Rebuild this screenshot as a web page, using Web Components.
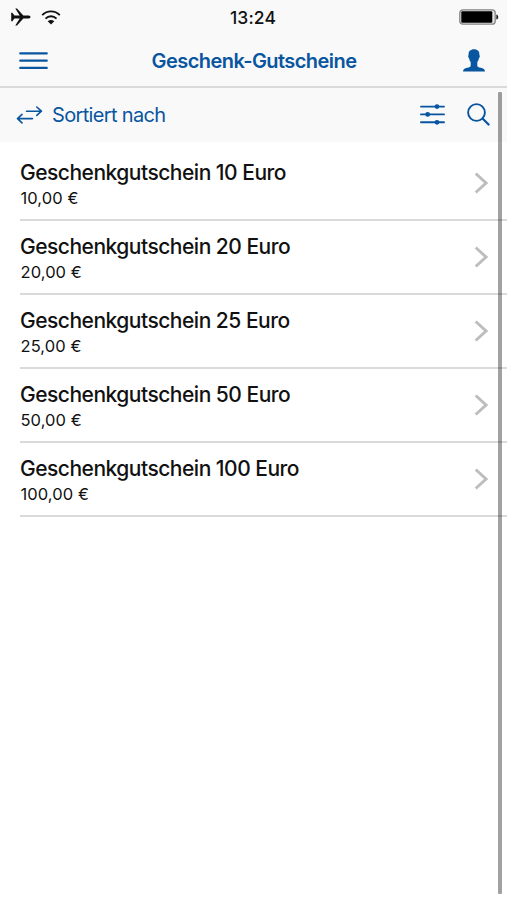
<!DOCTYPE html>
<html lang="de">
<head>
<meta charset="utf-8">
<meta name="viewport" content="width=device-width, initial-scale=1">
<title>Geschenk-Gutscheine</title>
<style>
    body {
        margin: 0;
        background: #fff;
        font-family: Inter, "Liberation Sans", sans-serif;
        color: #111;
    }
</style>
</head>
<body>
<voucher-screen>
    <status-bar time="13:24"></status-bar>
    <nav-bar>Geschenk-Gutscheine</nav-bar>
    <sort-bar>Sortiert nach</sort-bar>
    <voucher-item price="10,00 €">Geschenkgutschein 10 Euro</voucher-item>
    <voucher-item price="20,00 €">Geschenkgutschein 20 Euro</voucher-item>
    <voucher-item price="25,00 €">Geschenkgutschein 25 Euro</voucher-item>
    <voucher-item price="50,00 €">Geschenkgutschein 50 Euro</voucher-item>
    <voucher-item price="100,00 €">Geschenkgutschein 100 Euro</voucher-item>
</voucher-screen>

<script>
const ICONS = {
    plane: { w: 20, h: 18, body: '<path fill="currentColor" d="M.2 4.800h1.200l2 2.800 5.300-.1L4.300.6h1.700l6.300 6.900h4.700c1.500 0 2.600.7 2.600 1.500s-1.100 1.500-2.600 1.500h-4.700l-6.300 6.900H4.300l4.400-6.900-5.300-.1-2 2.800H.2z"/>' },
    wifi: { w: 20, h: 15, body: '<g fill="none" stroke="currentColor" stroke-width="1.900"><path d="M1.200 5.100C6.200.1 13.800.1 18.800 5.100"/><path d="M4.500 8.600c3.200-3.100 7.800-3.100 11 0"/></g><path fill="currentColor" d="M10 14.500 6.700 11.300c2-1.700 4.600-1.700 6.600 0z"/>' },
    battery: { w: 40, h: 16, body: '<rect x=".8" y=".8" width="35.400" height="14.400" rx="3" fill="#e6e6e6" stroke="#858585" stroke-width="1.300"/><rect x="2.300" y="2.300" width="31" height="11.400" rx="1" fill="#000"/><path d="M37.300 5.400c2.600.5 2.600 4.700 0 5.200z" fill="#222"/>' },
    menu: { w: 29, h: 18, body: '<path d="M1.300 1.400h26.400M1.300 8.700h26.400M1.300 15.900h26.400" fill="none" stroke="currentColor" stroke-width="2.300" stroke-linecap="round"/>' },
    user: { w: 22, h: 23, body: '<path fill="currentColor" d="M11 .3c3.700 0 5.700 2.200 5.400 5.700.8.500.5 2.700-.5 3.200-.3 1.700-.8 2.800-1.600 3.700v3.500c0 1.400 1.300 1.900 3.400 2.400 2.900.7 4.100 1.600 4.300 3.700H0c.2-2.100 1.400-3 4.300-3.700 2.100-.5 3.400-1 3.400-2.400v-3.500c-.8-.9-1.300-2-1.600-3.700-1-.5-1.300-2.700-.5-3.200C5.300 2.500 7.300.3 11 .3z"/>' },
    swap: { w: 27, h: 18, body: '<path d="M10.500 5.200H25M20.800 1l4.600 4.200-4.600 4.200M16.500 12.600H1.700M6 8.300l-4.500 4.300L6 16.900" fill="none" stroke="currentColor" stroke-width="1.600" stroke-linecap="round" stroke-linejoin="round"/>' },
    filter: { w: 25, h: 21, body: '<path d="M1 2.600h23M1 10.400h23M1 18.300h23" fill="none" stroke="currentColor" stroke-width="1.900" stroke-linecap="round"/><g fill="currentColor"><circle cx="17" cy="2.600" r="2.400"/><circle cx="7.700" cy="10.400" r="2.400"/><circle cx="17" cy="18.300" r="2.400"/></g>' },
    search: { w: 23, h: 23, body: '<g fill="none" stroke="currentColor" stroke-linecap="round"><circle cx="9.500" cy="9.500" r="8.400" stroke-width="1.900"/><path d="M15.800 15.800 21.600 21.500" stroke-width="2.200"/></g>' },
    chevron: { w: 14, h: 22, body: '<path d="M1.700 1.500 12 11 1.700 20.500" fill="none" stroke="currentColor" stroke-width="2.900"/>' }
};

class UiIcon extends HTMLElement {
    constructor() {
        super();
        this.attachShadow({ mode: 'open' });
    }

    connectedCallback() {
        const icon = ICONS[this.getAttribute('name')];
        this.shadowRoot.innerHTML = `
        <style>
            :host { display: block; flex: none; }
            svg { display: block; }
        </style>
        <svg width="${icon.w}" height="${icon.h}" viewBox="0 0 ${icon.w} ${icon.h}" aria-hidden="true">${icon.body}</svg>
        `;
    }
}
customElements.define('ui-icon', UiIcon);

class VoucherScreen extends HTMLElement {
    constructor() {
        super();
        this.attachShadow({ mode: 'open' });
    }

    connectedCallback() {
        this.shadowRoot.innerHTML = `
        <style>
            :host {
                --blue: #0855a0;
                --bar: #f9f9f9;
                display: flex;
                flex-direction: column;
                position: relative;
                height: 900px;
                overflow: hidden;
            }
            /* scroll indicator floats over the list */
            .scroll {
                position: absolute;
                top: 92px;
                right: 5px;
                bottom: 6px;
                width: 4px;
                border-radius: 1px;
                background: rgba(0, 0, 0, .37);
            }
        </style>
        <slot></slot>
        <div class="scroll"></div>
        `;
    }
}
customElements.define('voucher-screen', VoucherScreen);

class StatusBar extends HTMLElement {
    constructor() {
        super();
        this.attachShadow({ mode: 'open' });
    }

    connectedCallback() {
        this.shadowRoot.innerHTML = `
        <style>
            :host {
                display: grid;
                grid-template-columns: 1fr auto 1fr;
                align-items: center;
                box-sizing: border-box;
                height: 34px;
                padding: 0 8px 0 11px;
                background: var(--bar);
                color: #111;
            }
            .left { display: flex; align-items: center; gap: 9.500px; }
            .time { margin-right: 4px; font-size: 17.5px; font-weight: 500; letter-spacing: .1px; }
            .battery { justify-self: end; }
        </style>
        <div class="left"><ui-icon name="plane"></ui-icon><ui-icon name="wifi"></ui-icon></div>
        <span class="time">${this.getAttribute('time')}</span>
        <ui-icon class="battery" name="battery"></ui-icon>
        `;
    }
}
customElements.define('status-bar', StatusBar);

class NavBar extends HTMLElement {
    constructor() {
        super();
        this.attachShadow({ mode: 'open' });
    }

    connectedCallback() {
        this.shadowRoot.innerHTML = `
        <style>
            :host {
                display: grid;
                grid-template-columns: 1fr auto 1fr;
                align-items: center;
                box-sizing: border-box;
                height: 54px;
                padding: 2px 22px 0 19px;
                background: var(--bar);
                border-bottom: 2px solid #dadada;
                color: var(--blue);
            }
            .title { margin-left: 4px; font-size: 20px; font-weight: 600; letter-spacing: -.56px; }
            .user { justify-self: end; margin-bottom: 1px; }
        </style>
        <ui-icon name="menu"></ui-icon>
        <span class="title"><slot></slot></span>
        <ui-icon class="user" name="user"></ui-icon>
        `;
    }
}
customElements.define('nav-bar', NavBar);

class SortBar extends HTMLElement {
    constructor() {
        super();
        this.attachShadow({ mode: 'open' });
    }

    connectedCallback() {
        this.shadowRoot.innerHTML = `
        <style>
            :host {
                display: flex;
                align-items: center;
                box-sizing: border-box;
                height: 54px;
                margin-bottom: 5px;
                padding: 0 17px 1px 16px;
                background: var(--bar);
                color: var(--blue);
            }
            .label { flex: 1; margin-left: 9px; font-size: 20px; letter-spacing: -.66px; }
            .search { margin-left: 22px; }
        </style>
        <ui-icon name="swap"></ui-icon>
        <span class="label"><slot></slot></span>
        <ui-icon name="filter"></ui-icon>
        <ui-icon class="search" name="search"></ui-icon>
        `;
    }
}
customElements.define('sort-bar', SortBar);

class VoucherItem extends HTMLElement {
    constructor() {
        super();
        this.attachShadow({ mode: 'open' });
    }

    connectedCallback() {
        this.shadowRoot.innerHTML = `
        <style>
            :host {
                display: flex;
                align-items: center;
                box-sizing: border-box;
                height: 74px;
                margin-left: 20px;
                padding-right: 19.5px;
                border-bottom: 2px solid #dadada;
            }
            .text { flex: 1; padding-top: 3px; }
            .name { font-size: 21px; line-height: 27px; font-weight: 500; letter-spacing: -.5px; }
            .price { padding-left: .5px; font-size: 16.5px; line-height: 25px; letter-spacing: .08px; }
            ui-icon { color: #bdbdbd; }
        </style>
        <div class="text">
            <div class="name"><slot></slot></div>
            <div class="price">${this.getAttribute('price')}</div>
        </div>
        <ui-icon name="chevron"></ui-icon>
        `;
    }
}
customElements.define('voucher-item', VoucherItem);
</script>
</body>
</html>
